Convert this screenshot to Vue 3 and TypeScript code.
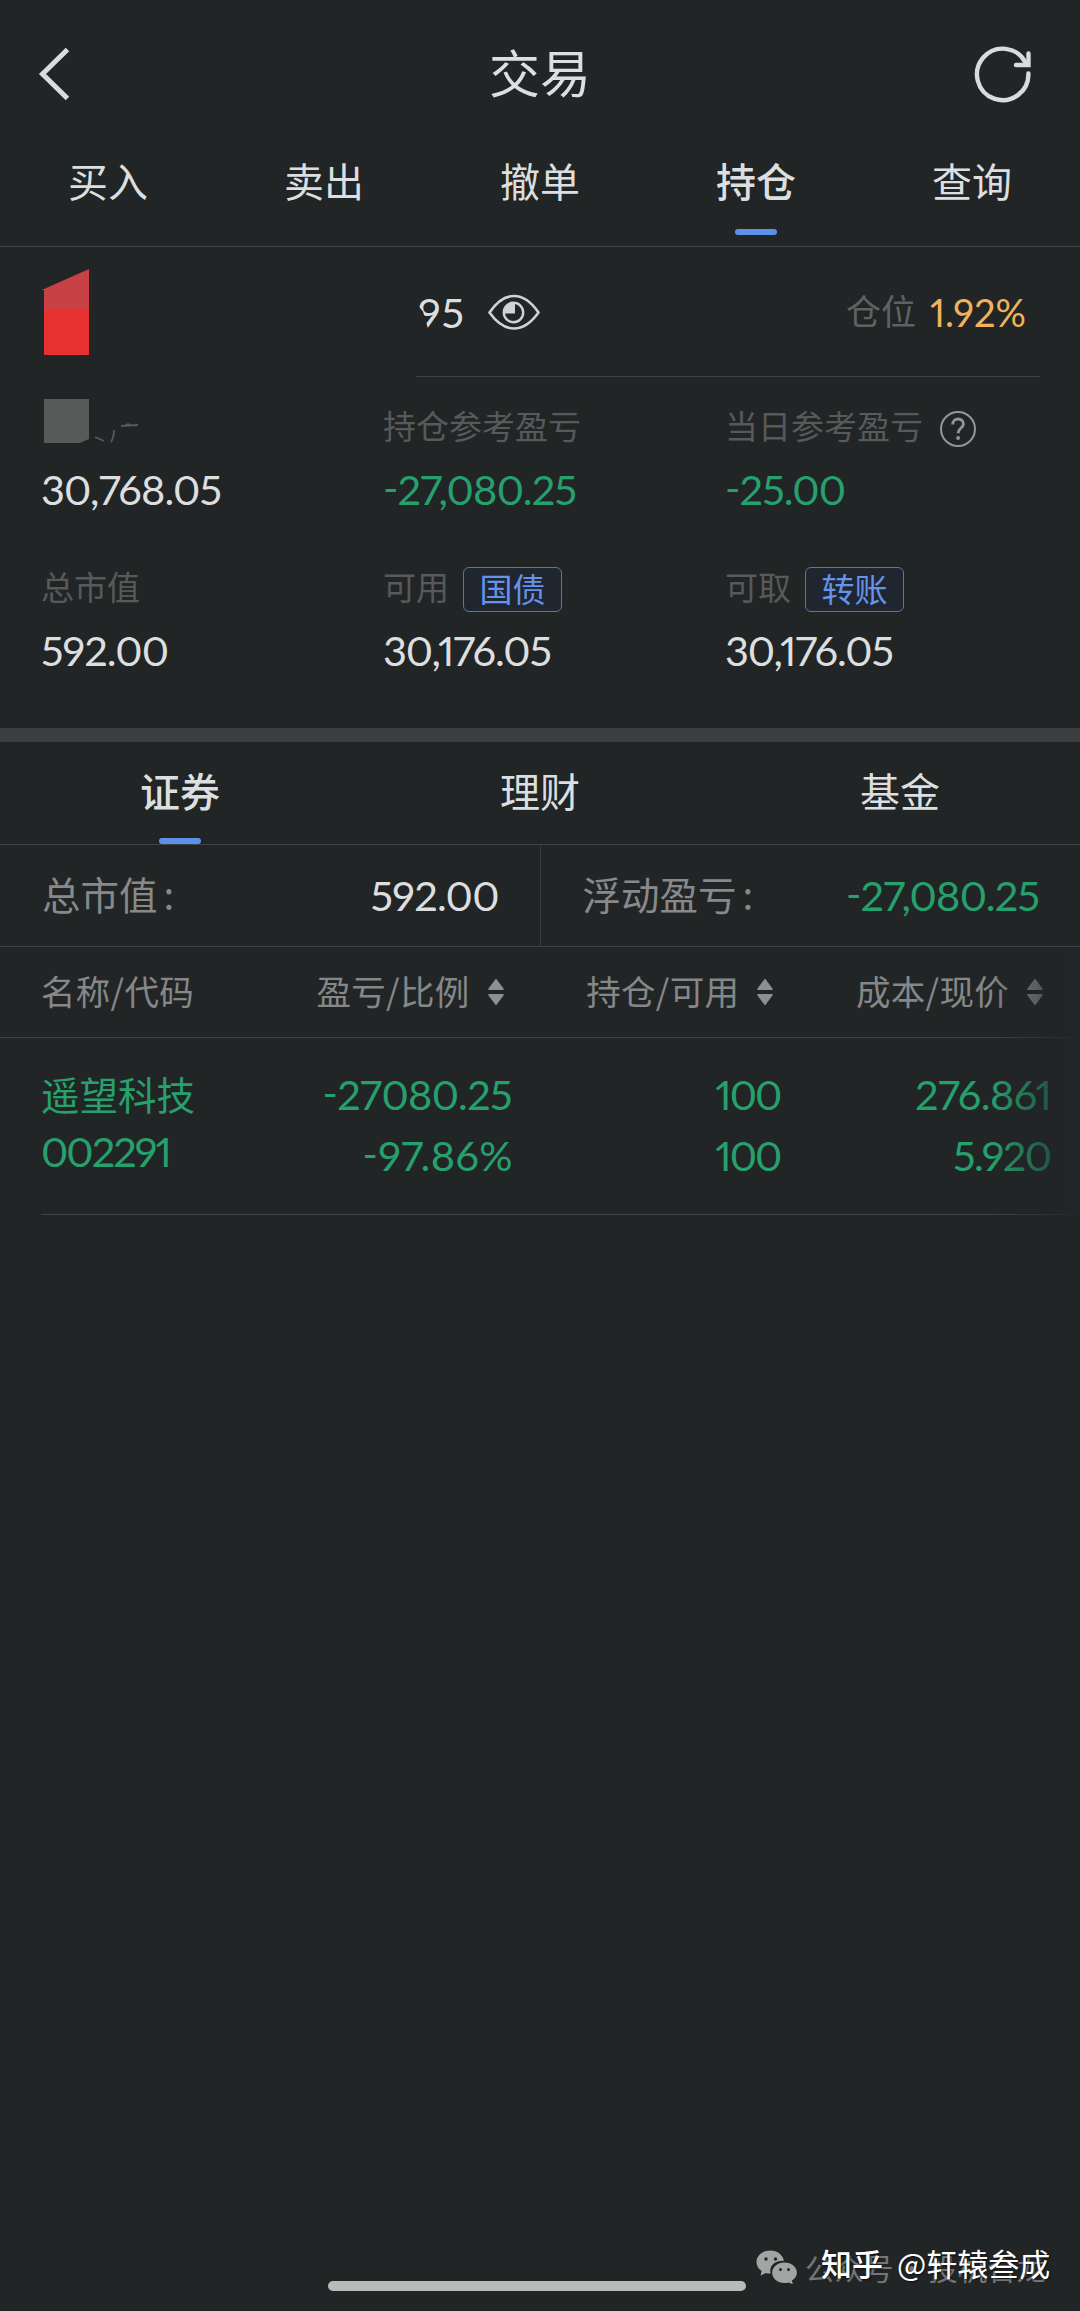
<script setup lang="ts">
import type { Directive } from 'vue'

interface Metric {
  label: string
  value: string
  width: number
  chip?: string
  help?: boolean
  masked?: boolean
  loss?: boolean
}

const mainTabs: string[] = ['买入', '卖出', '撤单', '持仓', '查询']
const assetTabs: string[] = ['证券', '理财', '基金']

const metrics: Metric[] = [
  { label: '', value: '30,768.05', width: 181, masked: true },
  { label: '持仓参考盈亏', value: '-27,080.25', width: 194, loss: true },
  { label: '当日参考盈亏', value: '-25.00', width: 121, loss: true, help: true },
  { label: '总市值', value: '592.00', width: 128 },
  { label: '可用', value: '30,176.05', width: 169, chip: '国债' },
  { label: '可取', value: '30,176.05', width: 169, chip: '转账' },
]

const columns: string[] = ['盈亏/比例', '持仓/可用', '成本/现价']

const holding = {
  name: '遥望科技',
  code: '002291',
  cells: [
    [{ text: '-27080.25', width: 190 }, { text: '-97.86%', width: 150 }],
    [{ text: '100', width: 67 }, { text: '100', width: 67 }],
    [{ text: '276.861', width: 137 }, { text: '5.920', width: 99 }],
  ],
}

// Spreads the letters of a figure so that it takes the given width.
const vFit: Directive<HTMLElement, number> = {
  mounted(el, { value }) {
    const count = (el.textContent ?? '').length
    const spacing = (value - el.getBoundingClientRect().width) / (count - 1)
    el.style.letterSpacing = `${spacing}px`
    el.style.marginRight = `${-spacing}px`
  },
}
</script>

<template>
  <div class="page">
    <header class="topbar">
      <svg class="back" width="34" height="56" viewBox="0 0 34 56">
        <path d="M30.500 3.500 5.500 28 30.500 52.500" fill="none" stroke="#d9dbdc" stroke-width="5" />
      </svg>
      <h1>交易</h1>
      <svg class="refresh" width="60" height="60" viewBox="0 0 60 60" fill="none" stroke="#d9dbdc" stroke-width="4.400">
        <path d="M55.400 29.500A25.700 25.700 0 1 1 52.500 18.500" stroke-linecap="round" />
        <path d="M55.500 9.500V21H43" stroke-linecap="round" stroke-linejoin="miter" />
      </svg>
    </header>

    <nav class="tabs">
      <div v-for="tab in mainTabs" :key="tab" class="tab" :class="{ active: tab === '持仓' }">
        <span>{{ tab }}</span>
        <i class="bar"></i>
      </div>
    </nav>

    <section class="account">
      <svg class="redact" width="48" height="88" viewBox="0 0 48 88">
        <path d="M0 22 3 21V22ZM3 21 48 1V43H3Z" fill="#c84145" />
        <path d="M3 42H48V87H3Z" fill="#e63331" />
      </svg>
      <div class="account-main">
        <span v-fit="46" class="num tail">95</span>
        <svg class="eye" width="54" height="40" viewBox="0 0 54 40" fill="none" stroke="#d0d2d3">
          <path d="M2.500 20.500C10 9.500 18 4 27 4S44 9.500 51.500 20.500C44 31 36 36.500 27 36.500S10 31 2.500 20.500Z" stroke-width="2.600" stroke-linejoin="round" />
          <circle cx="26.500" cy="20.500" r="9.700" stroke-width="2.400" />
          <path d="M28 10.500V21.500H17.500A10 10 0 0 1 28 10.500Z" fill="#d0d2d3" stroke="none" />
        </svg>
        <span class="ratio-label">仓位</span>
        <span class="ratio"><span v-fit="96" class="num">1.92%</span></span>
      </div>
    </section>

    <section class="metrics">
      <div v-for="(m, i) in metrics" :key="i" class="metric">
        <div class="metric-label">
          <svg v-if="m.masked" class="masked" width="100" height="48" viewBox="0 0 100 48">
            <path d="M3 0H48V40L39 44H3Z" fill="#585959" />
            <path d="m54 38 9 4M73 31q0 7-3 12M80 27l17-1" fill="none" stroke="#585959" stroke-width="1.800" />
            <path d="m87 24 4 2h-7Z" fill="#585959" />
          </svg>
          <span v-else>{{ m.label }}</span>
          <span v-if="m.chip" class="chip">{{ m.chip }}</span>
          <svg v-if="m.help" class="help" width="38" height="38" viewBox="0 0 38 38" fill="none" stroke="#949697">
            <circle cx="19" cy="19" r="17" stroke-width="2" />
            <path d="M13.700 14.500c0-3.600 2.400-5.500 5.400-5.500s5.300 2 5.300 4.900c0 4-5.300 4.500-5.300 9.300" stroke-width="2.800" />
            <circle cx="19.100" cy="28" r="1.900" fill="#949697" stroke="none" />
          </svg>
        </div>
        <div class="metric-value">
          <span v-fit="m.width" class="num" :class="{ loss: m.loss }">{{ m.value }}</span>
        </div>
      </div>
    </section>

    <div class="band"></div>

    <nav class="tabs asset-tabs">
      <div v-for="tab in assetTabs" :key="tab" class="tab" :class="{ active: tab === '证券' }">
        <span>{{ tab }}</span>
        <i class="bar"></i>
      </div>
    </nav>

    <section class="summary">
      <div class="summary-cell">
        <span class="summary-label">总市值<b>:</b></span>
        <span v-fit="129" class="num">592.00</span>
      </div>
      <div class="summary-cell">
        <span class="summary-label">浮动盈亏<b>:</b></span>
        <span v-fit="194" class="num loss">-27,080.25</span>
      </div>
    </section>

    <section class="table">
      <div class="thead">
        <span class="first">名称/代码</span>
        <span v-for="c in columns" :key="c" class="col">
          {{ c }}
          <svg width="16" height="28" viewBox="0 0 16 28" fill="#8c8e8f">
            <path d="M8 0.500 15.500 10.500V12H0.500V10.500Z" />
            <path d="M0.500 16H15.500V17.500L8 27.500 0.500 17.500Z" />
          </svg>
        </span>
      </div>
      <div class="holding">
        <div class="stock">
          <span class="name">{{ holding.name }}</span>
          <div><span v-fit="131" class="num">{{ holding.code }}</span></div>
        </div>
        <div v-for="(cell, i) in holding.cells" :key="i" class="pair">
          <div v-for="(line, j) in cell" :key="j">
            <span v-fit="line.width" class="num">{{ line.text }}</span>
          </div>
        </div>
      </div>
      <div class="rule"></div>
      <div class="fade"></div>
    </section>

    <div class="home"></div>

    <div class="source">
      <svg width="42" height="34" viewBox="0 0 42 34" fill="#a3a5a5">
        <path d="M14.500 0.500C6.500 0.500 0.500 5.600 0.500 12c0 3.800 2 6.900 5.200 9l-1.200 4.700 5.200-2.800c1.600.4 3.200.6 5 .5C12.600 16 18.500 10.500 28 10.800 26.500 4.500 21 0.500 14.500 0.500Z" />
        <path d="M28.500 12.500c-7 0-12.300 4.500-12.300 10.200S21.500 33 28.500 33c1.500 0 2.900-.2 4.200-.6l4.200 2-1-3.800c3-1.900 5-4.700 5-7.900 0-5.700-5.400-10.200-12.400-10.200Z" />
        <g fill="#222526">
          <circle cx="10" cy="9" r="1.700" />
          <circle cx="19.500" cy="9" r="1.700" />
          <circle cx="24.500" cy="19.500" r="1.500" />
          <circle cx="32.500" cy="19.500" r="1.500" />
        </g>
      </svg>
      <span>公众号 · 投机合龙</span>
    </div>
    <div class="author"><b>知乎</b><span>@轩辕叁成</span></div>
  </div>
</template>

<style>
html,
body {
  margin: 0;
  background: #222526;
}
</style>

<style scoped>
.page {
  position: relative;
  width: 1080px;
  height: 2311px;
  overflow: hidden;
  background: #222526;
  color: #dcdedf;
  font-family: 'Noto Sans CJK SC', sans-serif;
}
.num {
  display: inline-block;
  font-family: Lato, 'Noto Sans', sans-serif;
  font-size: 41.500px;
  font-feature-settings: 'pnum', 'case';
  line-height: 48px;
  white-space: nowrap;
}
.loss {
  color: #26a06c;
}

.topbar {
  display: flex;
  align-items: center;
  justify-content: space-between;
  box-sizing: border-box;
  height: 142px;
  padding: 6px 47px 0 37px;
}
.topbar h1 {
  margin: 0 0 6px 36px;
  font-size: 51px;
  font-weight: 400;
  line-height: 60px;
}
.back,
.refresh {
  display: block;
}

.tabs {
  display: flex;
  border-bottom: 1px solid #404344;
}
.tab {
  display: flex;
  flex: 1;
  flex-direction: column;
  align-items: center;
  font-size: 40px;
}
.tab span {
  line-height: 76px;
}
.tab .bar {
  width: 42px;
  height: 6px;
  margin: 11px 0;
  border-radius: 3px;
}
.tab.active .bar {
  background: #5f90e8;
}
.tab.active span {
  font-weight: 500;
}
.asset-tabs .tab span {
  line-height: 96px;
}
.asset-tabs .tab .bar {
  margin: 0;
}

.account {
  display: flex;
  align-items: center;
  height: 130px;
  padding: 0 40px 0 41px;
}
.redact {
  display: block;
  margin-right: 327px;
}
.account-main {
  display: flex;
  flex: 1;
  align-items: center;
  height: 129px;
  border-bottom: 1px solid #404344;
}
.tail {
  margin-left: 2px;
  clip-path: polygon(0 0, 100% 0, 100% 100%, 12px 100%, 5px 24px, 0 18px);
}
.eye {
  margin-left: 23px;
}
.ratio-label {
  margin: -4px 14px 0 auto;
  color: #5f6263;
  font-size: 35px;
}
.ratio {
  margin-right: 14px;
  color: #f0b25c;
}
.ratio .num {
  font-size: 38px;
}

.metrics {
  display: grid;
  grid-template-columns: 342px 342px 1fr;
  row-gap: 47px;
  padding: 24px 0 52px 41px;
}
.metric-label {
  display: flex;
  align-items: center;
  height: 48px;
  margin-bottom: 16px;
  color: #57595a;
  font-size: 33px;
  line-height: 48px;
}
.masked {
  align-self: flex-start;
  margin-top: -2px;
}
.metric-value {
  height: 50px;
}
.chip {
  box-sizing: border-box;
  width: 99px;
  height: 45px;
  margin: 6px 0 0 14px;
  border: 1px solid #5575b5;
  border-radius: 6px;
  background: #20262f;
  color: #6592ea;
  font-size: 33px;
  line-height: 40px;
  text-align: center;
}
.help {
  margin: 8px 0 0 16px;
}

.band {
  height: 14px;
  background: #3e3e40;
}

.summary {
  display: flex;
  height: 101px;
  border-bottom: 1px solid #404344;
}
.summary-cell {
  display: flex;
  flex: 1;
  align-items: center;
  justify-content: space-between;
  padding: 0 40px 2px 42px;
}
.summary-cell + .summary-cell {
  border-left: 1px solid #3a3d3e;
}
.summary-label {
  margin-top: -4px;
  color: #88898b;
  font-size: 38.500px;
}
.summary-label b {
  margin-left: 6px;
  font-weight: 400;
}

.table {
  position: relative;
}
.thead {
  display: flex;
  align-items: center;
  height: 90px;
  padding: 0 37px 0 41px;
  border-bottom: 1px solid #404344;
  color: #858789;
  font-size: 34.500px;
  letter-spacing: 0.3px;
}
.first,
.col {
  padding-bottom: 4px;
}
.first {
  width: 193px;
}
.col {
  display: flex;
  align-items: center;
  justify-content: flex-end;
  width: 270px;
}
.col svg {
  margin: 4px 0 0 18px;
}
.holding {
  display: flex;
  height: 150px;
  padding: 26px 28px 0 41px;
  color: #26a06c;
}
.stock {
  width: 202px;
}
.name {
  display: block;
  font-size: 38.500px;
  line-height: 58px;
}
.stock .num {
  line-height: 59px;
}
.pair {
  width: 270px;
  text-align: right;
}
.pair > div {
  display: flex;
  justify-content: flex-end;
}
.pair .num {
  line-height: 61px;
}
.rule {
  height: 1px;
  margin: 0 8px 0 41px;
  background: #404344;
}
.fade {
  position: absolute;
  top: 0;
  right: 0;
  width: 90px;
  height: 268px;
  background: linear-gradient(to right, rgba(34, 37, 41, 0), rgba(34, 37, 41, 0.9));
}

.home {
  position: absolute;
  bottom: 20px;
  left: 328px;
  width: 418px;
  height: 10px;
  border-radius: 5px;
  background: #b9bbbb;
}
.source {
  position: absolute;
  top: 2250px;
  left: 756px;
  display: flex;
  color: #747677;
  font-size: 29.500px;
  line-height: 34px;
  word-spacing: -4px;
  white-space: nowrap;
}
.source span {
  margin-left: 7px;
}
.author {
  position: absolute;
  top: 2243px;
  left: 821px;
  display: flex;
  color: #fff;
  font-size: 31px;
  line-height: 40px;
  text-shadow: 1px 1px 2px rgba(0, 0, 0, 0.7);
  white-space: nowrap;
}
.author b {
  margin-right: 14px;
  font-weight: 500;
}
</style>
